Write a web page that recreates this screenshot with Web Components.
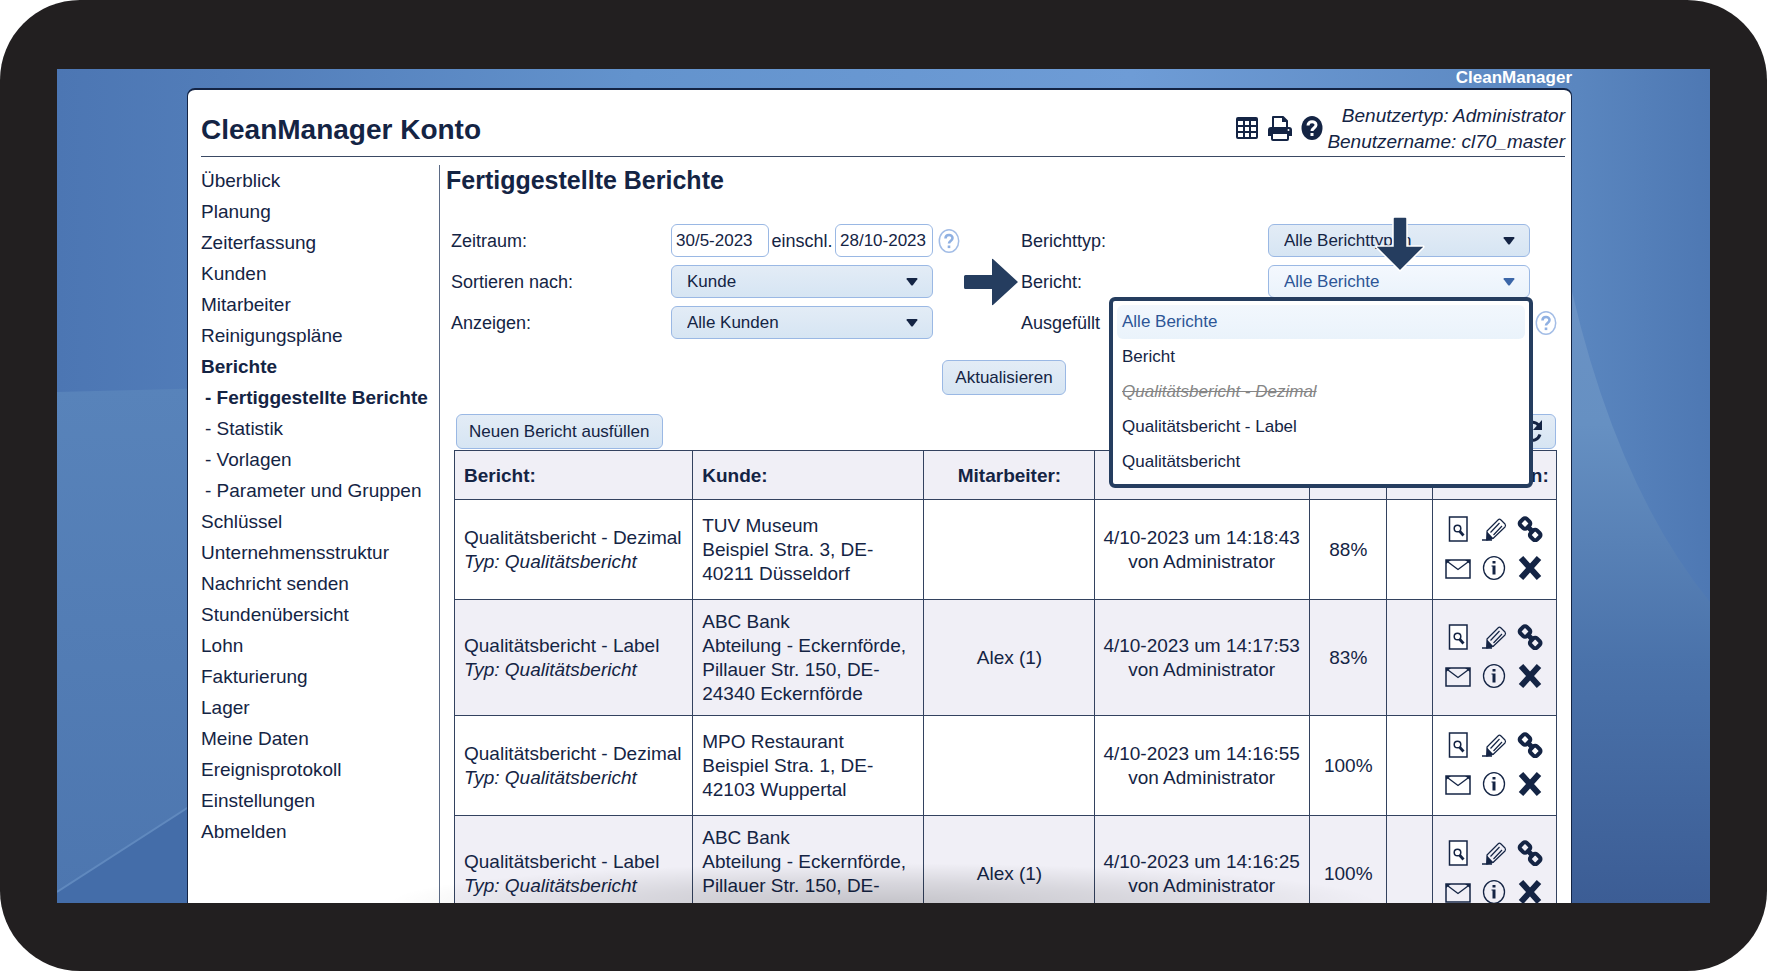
<!DOCTYPE html>
<html lang="de">
<head>
<meta charset="utf-8">
<title>CleanManager Konto</title>
<style>
  html, body { margin: 0; background: #fff; }
  body { font-family: "Liberation Sans", Arial, sans-serif; font-size: 18px; line-height: 24px; color: #142444; }
</style>
</head>
<body>
<cm-device>
  <cm-panel>
    <cm-nav slot="nav"></cm-nav>
    <cm-reports></cm-reports>
  </cm-panel>
</cm-device>

<script>
const define = (name, html, setup) => {
  const template = document.createElement('template');
  template.innerHTML = html;
  customElements.define(name, class extends HTMLElement {
    connectedCallback() {
      if (this.shadowRoot) return;
      const root = this.attachShadow({ mode: 'open' });
      root.append(template.content.cloneNode(true));
      if (setup) setup(this, root);
    }
  });
};

/* Icons */
const ICONS = {
  grid: [24, 24, '<rect x="1" y="1" width="22" height="22" rx="2" fill="currentColor"/><path fill="#fff" d="M3 5h5v4H3zM10 5h4v4h-4zM16 5h5v4h-5zM3 11h5v4H3zM10 11h4v4h-4zM16 11h5v4h-5zM3 17h5v4H3zM10 17h4v4h-4zM16 17h5v4h-5z"/>'],
  print: [24, 26, '<path fill="#fff" stroke="currentColor" stroke-width="2" stroke-linejoin="round" d="M5 14V2h10l4 4v8"/><path fill="currentColor" d="M14 1l6 6h-6z"/><path fill="currentColor" d="M3 12h18a3 3 0 0 1 3 3v6H0v-6a3 3 0 0 1 3-3z"/><rect x="4" y="18" width="16" height="7" rx="1" fill="#fff" stroke="currentColor" stroke-width="2"/><circle cx="20.500" cy="15" r="1" fill="#fff"/>'],
  helpSolid: [22, 26, '<ellipse cx="11" cy="13" rx="10.500" ry="12" fill="currentColor"/><path fill="none" stroke="#fff" stroke-width="3" d="M7 10.500C7 5.500 15 5.500 15 10c0 3-4 3-4 6"/><rect x="9.500" y="18" width="3" height="3" fill="#fff"/>'],
  help: [22, 26, '<ellipse cx="11" cy="13" rx="9.700" ry="11.300" fill="none" stroke="#a3bde6" stroke-width="1.500"/><path fill="none" stroke="#8fb0e2" stroke-width="2.600" d="M7.500 10.500C7.500 6 14.500 6 14.500 10c0 3-3.500 3-3.500 5.500"/><rect x="9.700" y="17.500" width="2.600" height="2.600" fill="#8fb0e2"/>'],
  refresh: [20, 24, '<path fill="none" stroke="currentColor" stroke-width="3" d="M16 6A8 9 0 1 0 17 14.500"/><path fill="currentColor" d="M19 0v10h-9z"/>'],
  preview: [26, 26, '<rect x="4.500" y="1" width="17.500" height="24" fill="#fff" stroke="currentColor" stroke-width="1.500"/><circle cx="12.500" cy="12.500" r="3.300" fill="none" stroke="currentColor" stroke-width="1.500"/><path stroke="currentColor" stroke-width="2.800" d="M14.500 15l4 4.500"/>'],
  edit: [26, 26, '<path fill="none" stroke="currentColor" stroke-width="1.200" stroke-linejoin="round" d="M6 15L17.500 3.500Q18.500 2.500 20 4L24 8Q25 9.500 24 11L12 22.500 6 24z M9.500 16.500L18.500 7 M12.500 19L21 10"/><path fill="currentColor" d="M6 15.500l6.500 7L5 24.500z"/><path stroke="currentColor" stroke-width="1.500" d="M1 24h10"/>'],
  link: [26, 26, '<g fill="none" stroke="currentColor" stroke-width="4"><rect x="3.500" y="3" width="9" height="9" rx="2.500" transform="rotate(45 8 7.500)"/><rect x="13.700" y="14.500" width="9" height="9" rx="2.500" transform="rotate(45 18.200 19)"/></g><path stroke="currentColor" stroke-width="5" d="M10.500 10.500l5.500 5.500"/>'],
  mail: [26, 26, '<rect x="1" y="5" width="24" height="18" fill="none" stroke="currentColor" stroke-width="1.500"/><path fill="none" stroke="currentColor" stroke-width="1.300" d="M1 5.500l8 6 4 3 4-3 8-6"/><path fill="currentColor" d="M1 5h5l-5 4zM25 5h-5l5 4z"/>'],
  info: [26, 26, '<ellipse cx="13" cy="13" rx="10.500" ry="11.300" fill="none" stroke="currentColor" stroke-width="1.300"/><path fill="currentColor" d="M11.500 6h3v2.500h-3zM10.500 10.500h4v9h-3v-8h-1z"/>'],
  remove: [26, 26, '<path stroke="currentColor" stroke-width="6" d="M4 3l18 20M22 3l-18 20"/>'],
  arrowRight: [54, 48, '<path fill="#253d5f" d="M1.500 17H28V1.500Q28 0 29.500 1.500L54 24 29.500 46.500Q28 48 28 46.500V31H1.500Q0 31 0 29.500v-11Q0 17 1.500 17z"/>'],
  arrowDown: [50, 56, '<path fill="#253d5f" stroke="#fff" stroke-width="1.500" d="M18 2.500Q18 1 19.500 1h11Q32 1 32 2.500V30h16q1.500 0 .5 1.500L25 55 1.500 31.500Q.5 30 2 30h16z"/>'],
  caret: [14, 10, '<path fill="currentColor" d="M2.500 1h9q1.500 0 .8 1.200L8 8q-1 1-2 0L1.700 2.200Q1 1 2.500 1z"/>']
};
define('cm-icon', `<style>:host{display:block;flex:none}svg{display:block}</style>`, (host, root) => {
  const [w, h, body] = ICONS[host.getAttribute('name')];
  root.innerHTML += `<svg width="${w}" height="${h}" viewBox="0 0 ${w} ${h}" aria-hidden="true">${body}</svg>`;
});

/* Tablet frame with the desktop wallpaper */
define('cm-device', `
<style>
  :host { display: block; height: 100vh; box-sizing: border-box; padding: 69px 57px 68px; background: #221f20; border-radius: 80px; }
  .screen { position: relative; height: 100%; overflow: hidden; background: #4f79b5; }
  .wall { position: absolute; inset: 0; width: 100%; height: 100%; }
  .brand { height: 19px; line-height: 17px; font-size: 17px; font-weight: bold; color: #fff; text-align: right; }
  .page { position: relative; margin: 0 138px 0 130px; }
  .shade { position: absolute; bottom: 0; left: 20%; right: 20%; height: 40px; pointer-events: none;
    background: radial-gradient(ellipse 50% 100% at 50% 100%, rgba(0,0,0,.18), rgba(0,0,0,.1) 50%, rgba(0,0,0,0)); }
</style>
<div class="screen">
  <svg class="wall" viewBox="0 0 1653 834" preserveAspectRatio="none" aria-hidden="true">
    <defs>
      <linearGradient id="t" x1="0" x2="1"><stop offset="0" stop-color="#4c76b3"/><stop offset=".1" stop-color="#527db9"/><stop offset=".35" stop-color="#6393cd"/><stop offset=".65" stop-color="#6e9cd6"/><stop offset=".92" stop-color="#5a86bf"/><stop offset="1" stop-color="#4e78b3"/></linearGradient>
      <linearGradient id="l" x1="0" x2="0" y1="0" y2="1"><stop offset="0" stop-color="#5883ba"/><stop offset="1" stop-color="#4d76af"/></linearGradient>
      <linearGradient id="r" x1="0" x2="0" y1="0" y2="1"><stop offset="0" stop-color="#6d93c6"/><stop offset=".3" stop-color="#6690c2"/><stop offset=".65" stop-color="#4a72aa"/><stop offset="1" stop-color="#3c5d95"/></linearGradient>
    </defs>
    <rect width="1653" height="834" fill="url(#t)"/>
    <path d="M0 323L200 318V834H0z" fill="url(#l)"/>
    <path d="M0 823L200 694V834H0z" fill="#446da9"/>
    <path d="M0 823L200 694" stroke="#6089be" stroke-width="2"/>
    <path d="M1500 150Q1545 400 1653 533V834H1500z" fill="url(#r)"/>
  </svg>
  <div class="page"><div class="brand">CleanManager</div><slot></slot></div>
  <div class="shade"></div>
</div>`);

/* White page with title bar */
define('cm-panel', `
<style>
  :host { display: block; box-sizing: border-box; border: 1px solid #142444; border-top-width: 2px; background: #fff; border-radius: 8px 8px 0 0; }
  header { display: flex; align-items: center; height: 66px; margin: 0 6px 0 13px; border-bottom: 1px solid #3a4963; }
  h1 { margin: 0 auto 0 0; font-size: 28px; line-height: 32px; padding-top: 14px; }
  .tools { display: flex; gap: 9px; align-items: center; margin-right: 4px; padding-top: 10px; }
  button { display: block; padding: 0; border: 0; background: none; color: inherit; }
  .user { font-style: italic; font-size: 19px; line-height: 26px; text-align: right; padding-top: 12px; }
  .body { display: grid; grid-template-columns: 252px minmax(0, 1fr); margin-top: 8px; }
</style>
<header>
  <h1>CleanManager Konto</h1>
  <div class="tools">
    <button aria-label="Tabelle"><cm-icon name="grid"></cm-icon></button>
    <button aria-label="Drucken"><cm-icon name="print"></cm-icon></button>
    <button aria-label="Hilfe"><cm-icon name="helpSolid"></cm-icon></button>
  </div>
  <div class="user">Benutzertyp: Administrator<br>Benutzername: cl70_master</div>
</header>
<div class="body"><slot name="nav"></slot><slot></slot></div>`);

/* Side menu */
define('cm-nav', `
<style>
  :host { display: block; border-right: 1px solid #5b6a85; font-size: 19px; }
  ul { list-style: none; margin: 0; padding: 0 0 0 13px; }
  li { line-height: 31px; white-space: nowrap; }
  .sub { padding-left: 4px; }
  .on { font-weight: bold; }
  a { color: inherit; text-decoration: none; }
</style>
<nav><ul></ul></nav>`, (host, root) => {
  const items = ['Überblick', 'Planung', 'Zeiterfassung', 'Kunden', 'Mitarbeiter', 'Reinigungspläne', '*Berichte',
    '*- Fertiggestellte Berichte', '- Statistik', '- Vorlagen', '- Parameter und Gruppen', 'Schlüssel',
    'Unternehmensstruktur', 'Nachricht senden', 'Stundenübersicht', 'Lohn', 'Fakturierung', 'Lager',
    'Meine Daten', 'Ereignisprotokoll', 'Einstellungen', 'Abmelden'];
  root.querySelector('ul').innerHTML = items.map(t => {
    const on = t[0] === '*', text = on ? t.slice(1) : t, sub = text[0] === '-';
    return `<li class="${on ? 'on' : ''} ${sub ? 'sub' : ''}"><a href="#">${text}</a></li>`;
  }).join('');
});

define('cm-button', `
<style>
  :host { display: block; }
  button { display: flex; align-items: center; height: 35px; padding: 0 12px; border: 1px solid #9ab8e4; border-radius: 6px;
    background: linear-gradient(#e3ecf6, #d6e5f3); font: inherit; font-size: 17px; color: inherit; }
</style>
<button><slot></slot></button>`, (host, root) => {
  const label = host.getAttribute('label');
  if (label) root.querySelector('button').setAttribute('aria-label', label);
});

/* Labelled drop-down; an "open" one also shows its list */
define('cm-select', `
<style>
  :host { position: relative; display: grid; grid-template-columns: 1fr 262px 27px; align-items: center; height: 33px; }
  .box { position: relative; display: grid; align-items: center; }
  select { grid-area: 1 / 1; height: 33px; width: 100%; box-sizing: border-box; appearance: none; padding: 0 36px 0 15px; margin: 0;
    border: 1px solid #9ab8e4; border-radius: 6px; background: linear-gradient(#e3ecf6, #d6e5f3); font: inherit; font-size: 17px; color: inherit; }
  .caret { grid-area: 1 / 1; justify-self: end; margin-right: 14px; pointer-events: none; color: #142444; }
  .help { margin-left: 5px; }
  .list { display: none; position: absolute; z-index: 2; top: 32px; right: -3px; width: 424px; box-sizing: border-box; margin: 0; padding: 4px;
    list-style: none; border: 4px solid #253d5f; border-radius: 6px; background: #fff; font-size: 17px; }
  .list li { padding: 0 5px; line-height: 34px; margin-bottom: 1px; border-radius: 6px; }
  .list li[aria-selected=true] { color: #2d5596; background: linear-gradient(#f2f7fd, #eaf3fb); }
  .list .gone { color: #858585; font-style: italic; text-decoration: line-through; }
  .down { display: none; position: absolute; z-index: 3; top: -49px; left: 107px; }
  .right { display: none; position: absolute; left: -57px; top: -7px; }
  :host([open]) .list, :host([open]) .down, :host([open]) .right { display: block; }
  :host([open]) select { color: #2d5596; background: linear-gradient(#f4f8fe, #eaf3fb); }
  :host([open]) .caret { color: #3b66a8; }
</style>
<label for="s"></label>
<div class="box">
  <select id="s"></select><cm-icon class="caret" name="caret"></cm-icon>
  <cm-icon class="down" name="arrowDown"></cm-icon>
  <ul class="list" role="listbox"></ul>
</div>
<cm-icon class="right" name="arrowRight"></cm-icon>`, (host, root) => {
  root.querySelector('label').textContent = host.getAttribute('label');
  const options = host.getAttribute('options').split('|');
  root.querySelector('select').innerHTML = options.map(o => `<option>${o}</option>`).join('');
  if (host.hasAttribute('open')) {
    root.querySelector('.list').innerHTML = options.map((o, i) =>
      `<li role="option" aria-selected="${i === 0}" class="${o.endsWith('Dezimal') ? 'gone' : ''}">${o}</li>`).join('');
  } else root.querySelectorAll('.list, .down, .right').forEach(n => n.remove());
  if (host.hasAttribute('help')) root.innerHTML += '<cm-icon class="help" name="help"></cm-icon>';
});

define('cm-period', `
<style>
  :host { display: grid; grid-template-columns: 1fr 262px 27px; align-items: center; height: 33px; }
  .range { display: flex; align-items: center; justify-content: space-between; }
  input { box-sizing: border-box; width: 98px; height: 33px; padding: 0 4px; margin: 0; border: 1px solid #9ab8e4; border-radius: 6px;
    background: #fff; font: inherit; font-size: 17px; color: inherit; }
  cm-icon { margin-left: 5px; }
</style>
<label for="from">Zeitraum:</label>
<div class="range"><input id="from" value="30/5-2023"><label for="to">einschl.</label><input id="to" value="28/10-2023"></div>
<cm-icon name="help"></cm-icon>`);

define('cm-filters', `
<style>
  :host { display: block; padding-left: 5px; }
  .cols { display: grid; grid-template-columns: minmax(0, 570fr) minmax(0, 536fr); }
  .col { display: grid; gap: 8px; }
  .first { padding-right: 61px; }
  .go { display: flex; justify-content: center; margin-top: 21px; }
</style>
<div class="cols">
  <div class="col first">
    <cm-period></cm-period>
    <cm-select label="Sortieren nach:" options="Kunde"></cm-select>
    <cm-select label="Anzeigen:" options="Alle Kunden"></cm-select>
  </div>
  <div class="col">
    <cm-select label="Berichttyp:" options="Alle Berichttypen"></cm-select>
    <cm-select open label="Bericht:" options="Alle Berichte|Bericht|Qualitätsbericht - Dezimal|Qualitätsbericht - Label|Qualitätsbericht"></cm-select>
    <cm-select help label="Ausgefüllt" options="Alle"></cm-select>
  </div>
</div>
<div class="go"><cm-button>Aktualisieren</cm-button></div>`);

define('cm-report-table', `
<style>
  :host { display: block; }
  table { width: 100%; table-layout: fixed; border-collapse: collapse; font-size: 19px; }
  th, td { border: 1px solid #33425f; padding: 10px 8px 9px 9px; text-align: center; }
  th { height: 29px; background: #f0eff6; }
  tbody tr { height: 100px; }
  tbody tr:nth-child(even) { background: #f0eff6; }
  .left { text-align: left; white-space: nowrap; }
  td.wide { padding-left: 4px; padding-right: 4px; white-space: nowrap; }
  .acts { display: grid; grid-template-columns: repeat(3, 26px); gap: 13px 10px; justify-content: center; padding-bottom: 4px; }
  button { display: block; padding: 0; border: 0; background: none; color: inherit; }
  th:last-child { padding-left: 0; padding-right: 0; }
</style>
<table>
  <colgroup><col style="width:238px"><col style="width:231px"><col style="width:170px"><col style="width:215px"><col style="width:77px"><col style="width:46px"><col style="width:124px"></colgroup>
  <thead><tr><th class="left">Bericht:</th><th class="left">Kunde:</th><th>Mitarbeiter:</th><th></th><th></th><th></th><th>Funktionen:</th></tr></thead>
  <tbody></tbody>
</table>`, (host, root) => {
  const bank = 'ABC Bank<br>Abteilung - Eckernförde,<br>Pillauer Str. 150, DE-<br>24340 Eckernförde';
  const rows = [
    ['Dezimal', 'TUV Museum<br>Beispiel Stra. 3, DE-<br>40211 Düsseldorf', '', '14:18:43', '88%'],
    ['Label', bank, 'Alex (1)', '14:17:53', '83%'],
    ['Dezimal', 'MPO Restaurant<br>Beispiel Stra. 1, DE-<br>42103 Wuppertal', '', '14:16:55', '100%'],
    ['Label', bank, 'Alex (1)', '14:16:25', '100%']
  ];
  const acts = [['preview', 'Vorschau'], ['edit', 'Bearbeiten'], ['link', 'Link'], ['mail', 'Senden'], ['info', 'Info'], ['remove', 'Löschen']]
    .map(([n, l]) => `<button aria-label="${l}"><cm-icon name="${n}"></cm-icon></button>`).join('');
  root.querySelector('tbody').innerHTML = rows.map(([kind, customer, staff, time, score]) => `<tr>
    <td class="left">Qualitätsbericht - ${kind}<br><i>Typ: Qualitätsbericht</i></td>
    <td class="left">${customer}</td><td>${staff}</td>
    <td class="wide">4/10-2023 um ${time}<br>von Administrator</td>
    <td>${score}</td><td></td><td class="wide"><div class="acts">${acts}</div></td></tr>`).join('');
});

define('cm-reports', `
<style>
  :host { display: block; padding: 0 14px 0 6px; }
  h2 { margin: 0 0 29px; font-size: 25px; line-height: 30px; }
  .bar { display: flex; justify-content: space-between; margin: 19px 0 1px; padding: 0 1px 0 10px; }
  cm-report-table { margin-left: 8px; }
</style>
<h2>Fertiggestellte Berichte</h2>
<cm-filters></cm-filters>
<div class="bar"><cm-button>Neuen Bericht ausfüllen</cm-button><cm-button label="Neu laden"><cm-icon name="refresh"></cm-icon></cm-button></div>
<cm-report-table></cm-report-table>`);
</script>
</body>
</html>
